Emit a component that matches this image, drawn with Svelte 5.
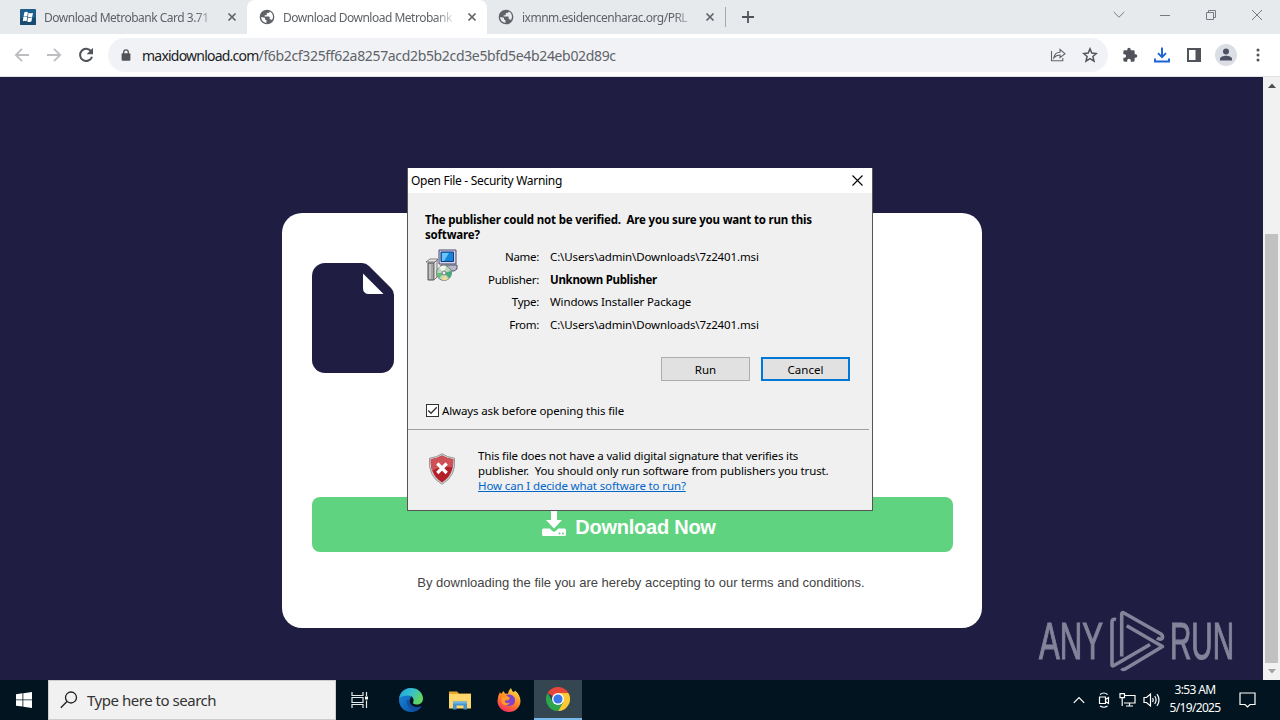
<script>
  const tabs = [
    { title: 'Download Metrobank Card 3.71', icon: 'win', active: false },
    { title: 'Download Download Metrobank', icon: 'globe', active: true },
    { title: 'ixmnm.esidencenharac.org/PRL', icon: 'globe', active: false }
  ];

  const rows = [
    { label: 'Name:', value: 'C:\\Users\\admin\\Downloads\\7z2401.msi' },
    { label: 'Publisher:', value: 'Unknown Publisher', bold: true },
    { label: 'Type:', value: 'Windows Installer Package' },
    { label: 'From:', value: 'C:\\Users\\admin\\Downloads\\7z2401.msi' }
  ];

  let alwaysAsk = true;
</script>

<div class="screen">
  <div class="tabstrip">
    {#each tabs as tab}
      <div class="tab" class:active={tab.active}>
        {#if tab.icon === 'win'}
          <svg class="fav" width="16" height="16" viewBox="0 0 16 16">
            <rect width="16" height="16" rx="1" fill="#1d5f8c" />
            <path d="M0 9h16v6a1 1 0 0 1-1 1H1a1 1 0 0 1-1-1z" fill="#174c70" />
            <path d="M4.200 3.500q2-1.200 3.700-.1L7.300 7.500q-1.700-1-3.700 0zM8.500 3.800q1.800 1 4.500.1l-.8 4q-2.200.8-4.200-.2zM3.400 8.100q1.900-1 3.800 0l-.6 4.100q-1.800-1-3.800 0zM7.900 8.400q1.900 1 4.200.1l-.7 4.100q-2.200.9-4.100-.2z" fill="#fff" />
          </svg>
        {:else}
          <svg class="fav" width="16" height="16" viewBox="0 0 24 24">
            <path d="M12 1a11 11 0 1 0 0 22 11 11 0 0 0 0-22zM10 20.600C6 19.700 3.200 16.200 3.200 12l5.800 1.200v1.400c0 1.200 1 2 2.200 2v3.900zM19.200 17c-.3-.9-1.100-1.500-2.100-1.500h-1.100v-3.200c0-.6-.5-1-1.100-1H8.500V9.200h2.100c.6 0 1.100-.5 1.100-1.100V6h2.200c1.200 0 2.200-1 2.200-2.200 4.600 2 6.600 8.300 3.100 13.200z" fill="#5f6368" />
          </svg>
        {/if}
        <span class="tab-title">{tab.title}</span>
        <svg class="tab-close" width="10" height="10" viewBox="0 0 10 10">
          <path d="M1.500 1.500l7 7M8.500 1.500l-7 7" stroke="#5f6368" stroke-width="1.700" />
        </svg>
      </div>
    {/each}
    <svg class="new-tab" width="12" height="12" viewBox="0 0 12 12">
      <path d="M6 0v12M0 6h12" stroke="#50545a" stroke-width="1.800" />
    </svg>
    <div class="win-buttons">
      <svg width="12" height="12" viewBox="0 0 12 12"><path d="M.7 3L6 8.200 11.300 3" /></svg>
      <svg width="12" height="12" viewBox="0 0 12 12"><path d="M1 6.500h10" /></svg>
      <svg width="12" height="12" viewBox="0 0 12 12"><path d="M1.500 3.500h7v7h-7zM3.500 3.500v-2h7v7h-2" /></svg>
      <svg width="12" height="12" viewBox="0 0 12 12"><path d="M1 1l10 10M11 1L1 11" /></svg>
    </div>
  </div>

  <div class="toolbar">
    <svg class="nav" width="16" height="16" viewBox="0 0 16 16">
      <path d="M15 8H2M8 1.800L1.800 8 8 14.200" fill="none" stroke="#bcbec1" stroke-width="1.800" />
    </svg>
    <svg class="nav" width="16" height="16" viewBox="0 0 16 16">
      <path d="M1 8h13M8 1.800L14.200 8 8 14.200" fill="none" stroke="#bcbec1" stroke-width="1.800" />
    </svg>
    <svg class="nav" width="16" height="16" viewBox="0 0 16 16">
      <path d="M13.200 4.400A6.100 6.100 0 1 0 14 9.700" fill="none" stroke="#50545a" stroke-width="2" />
      <path d="M15 .8v6.400H8.600z" fill="#50545a" />
    </svg>
    <div class="omnibox">
      <svg class="lock" width="10" height="12" viewBox="0 0 10 12">
        <path d="M2.700 5V3.200a2.300 2.300 0 0 1 4.600 0V5" fill="none" stroke="#50545a" stroke-width="1.300" />
        <rect x=".6" y="4.300" width="8.800" height="7.500" rx="1" fill="#50545a" />
      </svg>
      <span class="url"><b>maxidownload.com</b>/f6b2cf325ff62a8257acd2b5b2cd3e5bfd5e4b24eb02d89c</span>
      <svg class="share" width="16" height="16" viewBox="0 0 16 16">
        <path d="M1.500 4v9.800h11.300V11M3.800 10.800C4.400 7.300 6.600 5.400 10 5.300V2.500l5 4.200-5 4V8c-2.600 0-4.500.8-6.200 2.800z" fill="none" stroke="#5f6368" stroke-width="1.100" />
      </svg>
      <svg width="16" height="16" viewBox="0 0 16 16">
        <path d="M8 1.800l1.800 4.300 4.600.4-3.500 3 1.100 4.600L8 11.700l-4 2.400 1.100-4.600-3.500-3 4.600-.4z" fill="none" stroke="#50545a" stroke-width="1.500" />
      </svg>
    </div>
    <div class="actions">
      <svg width="16" height="16" viewBox="0 0 24 24">
        <path d="M20.500 11H19V7a2 2 0 0 0-2-2h-4V3.500a2.500 2.500 0 0 0-5 0V5H4a2 2 0 0 0-2 2v3.800h1.500a2.700 2.700 0 0 1 0 5.400H2V20a2 2 0 0 0 2 2h3.800v-1.500a2.700 2.700 0 0 1 5.400 0V22H17a2 2 0 0 0 2-2v-4h1.500a2.500 2.500 0 0 0 0-5z" fill="#50545a" />
      </svg>
      <svg width="16" height="16" viewBox="0 0 16 16">
        <path d="M8 .5v9.500M4 6.200l4 4 4-4M1 11.500v3h14v-3" fill="none" stroke="#1a62d6" stroke-width="1.900" />
      </svg>
      <svg width="16" height="16" viewBox="0 0 16 16">
        <path d="M1 1h14v14H1zM3 3v10h6.500V3z" fill="#50545a" fill-rule="evenodd" />
      </svg>
      <svg width="22" height="22" viewBox="0 0 22 22">
        <circle cx="11" cy="11" r="11" fill="#dcdee6" />
        <circle cx="11" cy="7.600" r="3" fill="#4c5166" />
        <path d="M5 16.500v-1.600c0-2.200 3.500-3.200 6-3.200s6 1 6 3.200v1.600z" fill="#4c5166" />
      </svg>
      <svg width="4" height="16" viewBox="0 0 4 16">
        <circle cx="2" cy="3" r="1.500" fill="#50545a" /><circle cx="2" cy="8" r="1.500" fill="#50545a" /><circle cx="2" cy="13" r="1.500" fill="#50545a" />
      </svg>
    </div>
  </div>

  <div class="viewport">
    <div class="page">
      <div class="card">
        <svg class="file" width="82" height="110" viewBox="0 0 82 110">
          <path d="M13 0h37q4 0 7 3l22 22q3 3 3 7v65a13 13 0 0 1-13 13H13A13 13 0 0 1 0 97V13A13 13 0 0 1 13 0z" fill="#1f1d42" />
          <path d="M51 10.500L71.500 31H56.500a5.500 5.500 0 0 1-5.500-5.500z" fill="#fff" />
        </svg>
        <div class="download">
          <svg width="24" height="26" viewBox="0 0 24 26">
            <path d="M9 0h6v9h5l-8 8.500L4 9h5z" fill="#fff" />
            <path d="M1.500 17.500h6.200l2.600 2.600q1.700 1.500 3.400 0l2.600-2.600h6.200q1.500 0 1.500 1.500v4.500q0 1.500-1.500 1.500h-21Q0 25 0 23.500V19q0-1.500 1.500-1.500z" fill="#fff" />
            <circle cx="17.500" cy="22.500" r="1" fill="#5fd37f" /><circle cx="21" cy="22.500" r="1" fill="#5fd37f" />
          </svg>
          <span>Download Now</span>
        </div>
        <p class="terms">By downloading the file you are hereby accepting to our terms and conditions.</p>
      </div>
      <div class="watermark">
        <span class="wm-any">ANY</span>
        <svg width="56" height="64" viewBox="0 0 56 64">
          <path d="M7 10.500Q3 9.500 3 13v43q0 1.500 2 .5l36-21" />
          <path d="M12.700 47.500V5q.3-2 2.300-1l37 21q2.500 2 1 4.500-2 1.500-5-.5" />
          <path d="M17.700 16.700l35.800 20.800L17 59.500q-3 2-4.500 0" />
        </svg>
        <span class="wm-run">RUN</span>
      </div>
    </div>
    <div class="scrollbar">
      <svg width="8" height="5" viewBox="0 0 8 5"><path d="M0 5l4-4.500L8 5z" fill="#505050" /></svg>
      <div class="thumb"></div>
      <svg width="8" height="5" viewBox="0 0 8 5"><path d="M0 0l4 4.500L8 0z" fill="#a0a0a0" /></svg>
    </div>
  </div>

  <div class="taskbar">
    <div class="start">
      <svg width="16" height="16" viewBox="0 0 16 16">
        <path d="M0 2.200l6.500-.9v6.200H0zM7.300 1.200L16 0v7.500H7.300zM0 8.300h6.500v6.300L0 13.700zM7.300 8.300H16V16l-8.700-1.200z" fill="#fff" />
      </svg>
    </div>
    <div class="search">
      <svg width="18" height="18" viewBox="0 0 18 18">
        <circle cx="11" cy="6.500" r="5.500" fill="none" stroke="#222" stroke-width="1.300" />
        <path d="M7 10.500L.8 16.700" stroke="#222" stroke-width="1.400" />
      </svg>
      <span>Type here to search</span>
    </div>
    <div class="task">
      <svg width="18" height="16" viewBox="0 0 18 16" fill="none" stroke="#e8eaec" stroke-width="1.200">
        <path d="M1 0v3.500h11V0M1 16v-3.500h11V16M1 5.500h11v5H1zM15.500 0v4M15.500 8.500V16" />
        <path d="M14 4.500h3v3h-3z" fill="#fff" stroke="none" />
      </svg>
    </div>
    <div class="task edge">
      <svg width="24" height="24" viewBox="0 0 24 24">
        <defs>
          <linearGradient id="edge-top" x1="0" y1="0" x2="1" y2=".5">
            <stop offset="0" stop-color="#1e9fd8" /><stop offset=".5" stop-color="#35bfd0" /><stop offset="1" stop-color="#62d65f" />
          </linearGradient>
          <linearGradient id="edge-low" x1="0" y1="0" x2="1" y2="1">
            <stop offset="0" stop-color="#1a8be0" /><stop offset="1" stop-color="#0b4b9c" />
          </linearGradient>
        </defs>
        <path d="M12 0C5 0 0 5.500 0 12s5 12 12 12c4.500 0 8.200-2.200 10.500-5.800-6 2.800-12-.5-12-5.200 0-2 1-3 2-4z" fill="url(#edge-low)" />
        <path d="M7.500 12c0 6 4 11 9.500 11 2.200-.8 4.100-2.500 5.500-4.800-6 2.800-11.500-.5-12-5.200z" fill="#104f9f" />
        <path d="M.2 10C1.200 4.200 6 0 12 0c7 0 12 5 12 10.500 0 4-3 6-6.500 6-3 0-4-1.200-3.300-2.300 1-1.500.7-6.700-5.200-6.700-4 0-7.300 1-8.800 2.500z" fill="url(#edge-top)" />
      </svg>
    </div>
    <div class="task">
      <svg width="22" height="20" viewBox="0 0 22 20">
        <path d="M0 1.500h8l2 2h12V18H0z" fill="#e7a62c" />
        <path d="M0 4h22v14.500H0z" fill="#ffd66b" />
        <path d="M4 19.500v-8h14v8h-3.500v-4h-7v4z" fill="#4494cf" />
        <path d="M4 11.500h14v2H4z" fill="#72b7e3" />
      </svg>
    </div>
    <div class="task">
      <svg width="24" height="24" viewBox="0 0 24 24">
        <defs>
          <linearGradient id="fox" x1=".8" y1="0" x2=".3" y2="1">
            <stop offset="0" stop-color="#ffe14a" /><stop offset=".5" stop-color="#ff8a24" /><stop offset="1" stop-color="#f52d60" />
          </linearGradient>
        </defs>
        <path d="M3 4l1 2 2.500-3 1.500 2.500 3 .2Q11.500 2 14 0q.5 3 3 4.300L18 2.500Q23.500 7 23.500 13A11.500 11 0 0 1 .5 13Q.5 8 3 4z" fill="url(#fox)" />
        <path d="M9 7q7-2 9 4 .8 7-6.500 7-6-.5-5.500-6l5 .5 2-2z" fill="#8042c9" />
        <path d="M5 9q5-2 8 1-2 0-2.500 2-3.500 0-2.500 2 1.500 2 5 .5-2 3.500-6 2.500Q3 15 5 9z" fill="#ff9b2a" />
      </svg>
    </div>
    <div class="task current">
      <svg width="24" height="24" viewBox="0 0 24 24">
        <path d="M12 12L1.600 6A12 12 0 0 1 22.400 6z" fill="#e8453a" />
        <path d="M12 12V6h10.400A12 12 0 0 1 12 24l5.200-9z" fill="#fcc934" />
        <path d="M12 24A12 12 0 0 1 1.600 6l5.200 9 5.200 3 5.200-3z" fill="#2da44e" />
        <circle cx="12" cy="12" r="6" fill="#fff" /><circle cx="12" cy="12" r="4.600" fill="#3b78e7" />
      </svg>
    </div>
    <div class="tray">
      <svg width="12" height="8" viewBox="0 0 12 8"><path d="M.8 6.800L6 1.500l5.200 5.300" /></svg>
      <svg class="cam" width="12" height="16" viewBox="0 0 12 16">
        <path d="M1.500 5h6v6.500h-6zM7.500 7.500l3-2v6l-3-2M2 2.500q4-3 7.500 0M2 14q4 2.500 7.500 0" />
      </svg>
      <svg class="net" width="17" height="14" viewBox="0 0 17 14">
        <path d="M6 2.500h10v7.500H5M10.500 10v3M7 13h7M1 .7h4.500v4H1zM3.200 4.700V13" />
      </svg>
      <svg class="vol" width="17" height="16" viewBox="0 0 17 16">
        <path d="M1 5.500h2.500l4-3.500v12l-4-3.500H1zM9.500 6q1.500 2 0 4M11.700 4q2.800 4 0 8M14 2.200q4 5.800 0 11.600" />
      </svg>
      <div class="clock"><div>3:53 AM</div><div>5/19/2025</div></div>
      <svg width="17" height="16" viewBox="0 0 17 16"><path d="M1 1h15v11.500h-5L8.500 15 6 12.500H1z" /></svg>
    </div>
  </div>

  <div class="dialog">
    <div class="dialog-title">
      <span>Open File - Security Warning</span>
      <svg width="11" height="11" viewBox="0 0 11 11"><path d="M.5 .5l10 10M10.500 .5l-10 10" stroke="#000" stroke-width="1.100" /></svg>
    </div>
    <div class="dialog-main">
      <div class="question"><div>The publisher could not be verified.&nbsp; Are you sure you want to run this</div><div>software?</div></div>
      <div class="info">
        <svg width="32" height="32" viewBox="0 0 32 32">
          <path d="M13 1h17v14H13z" fill="#d5d6e8" stroke="#4a4b70" />
          <path d="M15 3h12.500v9.500H15z" fill="#1683d8" stroke="#123a86" />
          <path d="M16 4h7l-5 8h-2z" fill="#69c4f4" />
          <path d="M15 16h16v4l-3 2H14z" fill="#b9b9c9" stroke="#55556d" />
          <path d="M0 13l4-3h8l-2 3z" fill="#e5e5e5" stroke="#555" stroke-width=".7" />
          <path d="M2 14h6v17H2z" fill="#a7a7a7" stroke="#555" />
          <path d="M8 14l3-3v17l-3 3z" fill="#e4e4e4" stroke="#777" />
          <path d="M4 15v15" stroke="#ddd" />
          <circle cx="18" cy="24" r="7.500" fill="#b8d7c1" stroke="#78857b" />
          <path d="M18 24l-5-5.500q4-3 7-1.500z" fill="#f1f4e6" />
          <path d="M18 24l7-2q1 4-2 7z" fill="#3faf80" />
          <path d="M18 24l-2 7q4 1 6-1z" fill="#e9dc98" />
          <path d="M18 24h-7q0 3 2 5z" fill="#63bd75" />
          <circle cx="18" cy="24" r="2" fill="#eee" stroke="#777" />
        </svg>
        <div class="rows">
          {#each rows as row}
            <div class="row">
              <span class="label">{row.label}</span>
              <span class="value" class:bold={row.bold}>{row.value}</span>
            </div>
          {/each}
        </div>
      </div>
      <div class="buttons">
        <button>Run</button>
        <button class="default">Cancel</button>
      </div>
      <div class="ask">
        <span class="check">
          {#if alwaysAsk}
            <svg width="11" height="11" viewBox="0 0 11 11"><path d="M1.200 5.500l2.800 2.800 5.800-6" fill="none" stroke="#333" stroke-width="1.300" /></svg>
          {/if}
        </span>
        <span>Always ask before opening this file</span>
      </div>
    </div>
    <div class="dialog-foot">
      <svg width="28" height="32" viewBox="0 0 28 32">
        <path d="M14 .7q5 3.500 12.500 4.500Q28.500 23 14 31.300-.5 23 1.500 5.200 9 4.200 14 .7z" fill="#d0d0d0" stroke="#888" stroke-width=".8" />
        <path d="M14 2.500q5 3 11.200 3.800Q26 22 14 29.500 2 22 2.800 6.300 9 5.500 14 2.500z" fill="#b3202a" />
        <path d="M14 2.500q5 3 11.200 3.800.2 4-.7 8Q13 12 4 18 2.500 12 2.800 6.300 9 5.500 14 2.500z" fill="#cf5158" />
        <path d="M9.300 10.500l9.400 9.500M18.700 10.500L9.300 20" stroke="#fff" stroke-width="3.200" />
      </svg>
      <div class="foot-text">
        <div class="f1">This file does not have a valid digital signature that verifies its</div>
        <div>publisher.&nbsp; You should only run software from publishers you trust.</div>
        <span class="link">How can I decide what software to run?</span>
      </div>
    </div>
  </div>
</div>

<style>
  :global(body) { margin: 0; overflow: hidden; }
  .screen { position: relative; width: 1280px; height: 720px; display: flex; flex-direction: column; overflow: hidden; font-family: "Noto Sans", "Open Sans", sans-serif; font-size: 12px; }
  svg { flex: none; display: block; }

  .tabstrip { height: 34px; flex: none; display: flex; align-items: center; background: #e7eaed; }
  .tab { box-sizing: border-box; width: 239px; height: 34px; padding: 0 10px 0 12px; display: flex; align-items: center; color: #5f6368; }
  .tab:first-child { width: 247px; padding-left: 20px; }
  .tab.active { width: 240px; background: #fff; border-radius: 8px 8px 0 0; }
  .tab:nth-child(3) { border-right: 1px solid #a4a7ab; height: 20px; padding-left: 11px; }
  .tab-title { width: 173px; margin-left: 8px; overflow: hidden; white-space: nowrap; letter-spacing: -0.500px; -webkit-mask-image: linear-gradient(90deg, #000 88%, transparent); mask-image: linear-gradient(90deg, #000 88%, transparent); }
  .tab-close { margin-left: auto; }
  .new-tab { margin-left: 16px; }
  .win-buttons { margin: 0 17px 5px auto; display: flex; gap: 34px; }
  .win-buttons path { fill: none; stroke: #777b80; }

  .toolbar { box-sizing: border-box; height: 43px; flex: none; display: flex; align-items: center; padding: 0 20px 0 14px; background: #fff; border-bottom: 1px solid #dfe1e5; }
  .nav { margin-right: 16px; }
  .omnibox { box-sizing: border-box; width: 1000px; height: 34px; margin-left: -2px; padding: 0 10px 0 13px; display: flex; align-items: center; border-radius: 17px; background: #f0f2f5; }
  .url { margin-left: 11px; font-size: 14px; color: #5f6368; letter-spacing: -0.340px; white-space: nowrap; }
  .url b { font-weight: 400; color: #202124; letter-spacing: -0.780px; }
  .share { margin-left: auto; margin-right: 16px; }
  .actions { margin-left: auto; display: flex; align-items: center; gap: 16px; }
  .actions svg:nth-child(4) { margin: 0 -3px; }
  .actions svg:last-child { margin-left: 6px; }

  .viewport { flex: 1; display: flex; min-height: 0; }
  .page { position: relative; width: 1263px; background: #1f1d42; display: flex; justify-content: center; align-items: flex-start; }
  .card { box-sizing: border-box; width: 700px; height: 415px; margin: 136px 0 0 1px; padding: 50px 29px 0 30px; border-radius: 20px; background: #fff; }
  .download { height: 55px; margin-top: 124px; display: flex; align-items: center; justify-content: center; gap: 9px; border-radius: 8px; background: #5fd37f; color: #fff; font: bold 20px "Liberation Sans", sans-serif; letter-spacing: -0.250px; padding-right: 7px; }
  .download svg { margin-top: -2px; }
  .download span { margin-top: 6px; }
  .terms { margin: 23px 0 0; padding-left: 17px; text-align: center; white-space: nowrap; color: #444; font: 13px/16px "Liberation Sans", sans-serif; }
  .watermark { position: absolute; left: 1039px; top: 531px; display: flex; align-items: center; color: #84839a; }
  .watermark svg { margin: 0 5px; fill: none; stroke: #84839a; stroke-width: 3.600; stroke-linejoin: round; }
  .wm-any, .wm-run { font: 51px/64px "Liberation Sans Narrow", "Liberation Sans", sans-serif; padding-top: 2px; transform: scaleX(.58); transform-origin: left; -webkit-text-stroke: 1.200px #84839a; }
  .wm-any { width: 65px; transform: scaleX(.61); }

  .scrollbar { width: 17px; display: flex; flex-direction: column; align-items: center; background: #f1f1f1; padding: 6px 0; box-sizing: border-box; }
  .thumb { width: 13px; height: 429px; margin-top: auto; margin-bottom: 6px; background: #c1c1c1; }

  .taskbar { height: 40px; flex: none; display: flex; background: #02141f; }
  .start { width: 48px; display: flex; align-items: center; justify-content: center; }
  .search { box-sizing: border-box; width: 288px; display: flex; align-items: center; gap: 9px; padding: 0 0 0 11px; border: 1px solid #ccc; background: #f1f1f1; color: #333; font-size: 15px; letter-spacing: -0.470px; }
  .task { width: 48px; margin-right: 1px; display: flex; align-items: center; justify-content: center; }
  .edge { margin-left: 2px; }
  .task.current { box-sizing: border-box; background: #344650; border-bottom: 2px solid #76b9ed; }
  .tray { margin-left: auto; margin-right: 24px; display: flex; align-items: center; color: #fff; }
  .tray path { fill: none; stroke: #fff; stroke-width: 1.200; }
  .cam { margin-left: 13px; }
  .net { margin-left: 9px; }
  .vol { margin-left: 7px; }
  .clock { width: 66px; margin: 0 11px 0 2px; text-align: center; line-height: 18px; letter-spacing: -0.650px; margin-top: -2px; }

  .dialog { position: absolute; left: 407px; top: 168px; width: 464px; height: 342px; display: flex; flex-direction: column; border: 1px solid #555; border-top: 0; background: #f0f0f0; color: #000; font-size: 11.500px; line-height: 15px; letter-spacing: -0.130px; white-space: nowrap; }
  .dialog-title { height: 25px; flex: none; display: flex; align-items: center; justify-content: space-between; padding: 0 9px 1px 3px; box-sizing: border-box; background: #fff; font-size: 12px; letter-spacing: -0.300px; }
  .dialog-main { height: 236px; padding: 0 22px 0 18px; border-bottom: 1px solid #a0a0a0; margin-right: 3px; }
  .question { padding-top: 19px; margin-left: -1px; font-weight: 700; letter-spacing: -0.180px; }
  .info { display: flex; margin-top: 6px; }
  .info svg { margin-top: 1px; }
  .row { display: flex; height: 22.600px; line-height: 17px; }
  .label { width: 81px; text-align: right; letter-spacing: -0.300px; }
  .value { margin-left: 11px; }
  .bold { font-weight: 700; letter-spacing: -0.300px; }
  .buttons { display: flex; justify-content: flex-end; gap: 11px; margin: 19px -3px 0 0; }
  button { box-sizing: border-box; width: 89px; height: 24px; padding: 0; border: 1px solid #adadad; background: #e1e1e1; font: 11.500px "Noto Sans", sans-serif; color: #000; }
  .default { border: 2px solid #0078d7; }
  .ask { display: flex; align-items: center; gap: 3px; margin-top: 22px; }
  .check { width: 11px; height: 11px; border: 1px solid #333; background: #fff; }
  .dialog-foot { display: flex; align-items: flex-start; padding: 18px 0 0 20px; }
  .dialog-foot svg { margin-top: 5px; }
  .foot-text { margin-left: 22px; }
  .f1 { letter-spacing: -0.170px; }
  .link { color: #0066cc; text-decoration: underline; }
</style>
